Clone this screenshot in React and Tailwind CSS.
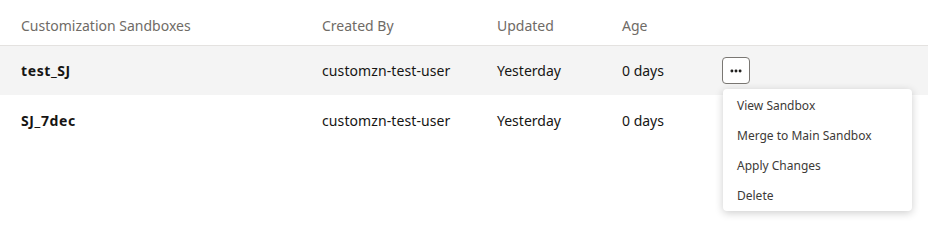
import { MoreHorizontal } from 'lucide-react';

const rows = [
  { name: 'test_SJ', by: 'customzn-test-user', updated: 'Yesterday', age: '0 days', active: true },
  { name: 'SJ_7dec', by: 'customzn-test-user', updated: 'Yesterday', age: '0 days' },
];

const menuItems = ['View Sandbox', 'Merge to Main Sandbox', 'Apply Changes', 'Delete'];

function Cols({ children, className = '' }) {
  return (
    <div className={`grid grid-cols-[301px_175px_125px_100px_1fr] items-center pl-[21px] ${className}`}>
      {children}
    </div>
  );
}

export default function App() {
  return (
    <div className="w-[928px] h-[223px] bg-white text-[14px] text-[#161513]" style={{ fontFamily: '"Noto Sans", Arial, sans-serif' }}>
      {/* Header */}
      <Cols className="h-[46px] pt-[5px] border-b border-[#e4e2e0] text-[#6f6b66]">
        <div>Customization Sandboxes</div>
        <div>Created By</div>
        <div>Updated</div>
        <div>Age</div>
        <div />
      </Cols>

      {rows.map((r) => (
        <Cols key={r.name} className={`h-[49px] ${r.active ? 'bg-[#f4f4f4]' : 'pt-[2px]'}`}>
          <div className="font-bold tracking-[0.6px]">{r.name}</div>
          <div className="tracking-[0.1px]">{r.by}</div>
          <div>{r.updated}</div>
          <div>{r.age}</div>
          <div className="relative">
            {r.active && (
              <>
                <button className="w-[28px] h-[27px] flex items-center justify-center rounded-[4px] border border-[#7a7773] bg-white text-[#161513]">
                  <MoreHorizontal size={14} strokeWidth={3} />
                </button>
                <div className="absolute left-[1px] top-[32px] w-[189px] rounded-[4px] bg-white shadow-[0_2px_8px_rgba(0,0,0,0.2)] pt-[2px] z-10">
                  {menuItems.map((m) => (
                    <div key={m} className="h-[30px] flex items-center px-[14px] text-[12px] text-[#3d3a37]">
                      {m}
                    </div>
                  ))}
                </div>
              </>
            )}
          </div>
        </Cols>
      ))}
    </div>
  );
}
